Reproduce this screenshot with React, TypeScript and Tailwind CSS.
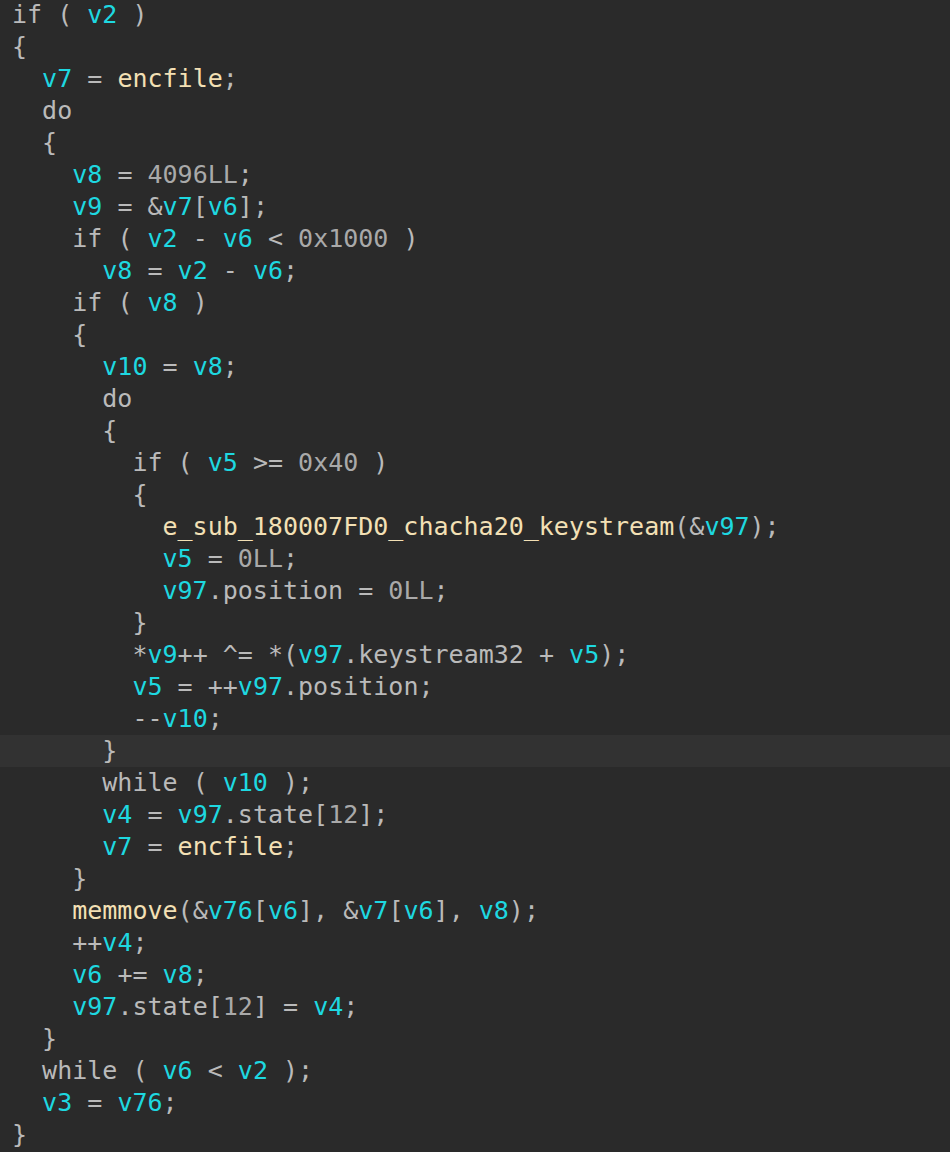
import React from 'react';

const lines = [
  'if ( v2 )',
  '{',
  '  v7 = encfile;',
  '  do',
  '  {',
  '    v8 = 4096LL;',
  '    v9 = &v7[v6];',
  '    if ( v2 - v6 < 0x1000 )',
  '      v8 = v2 - v6;',
  '    if ( v8 )',
  '    {',
  '      v10 = v8;',
  '      do',
  '      {',
  '        if ( v5 >= 0x40 )',
  '        {',
  '          e_sub_180007FD0_chacha20_keystream(&v97);',
  '          v5 = 0LL;',
  '          v97.position = 0LL;',
  '        }',
  '        *v9++ ^= *(v97.keystream32 + v5);',
  '        v5 = ++v97.position;',
  '        --v10;',
  '      }',
  '      while ( v10 );',
  '      v4 = v97.state[12];',
  '      v7 = encfile;',
  '    }',
  '    memmove(&v76[v6], &v7[v6], v8);',
  '    ++v4;',
  '    v6 += v8;',
  '    v97.state[12] = v4;',
  '  }',
  '  while ( v6 < v2 );',
  '  v3 = v76;',
  '}',
];

const globals = new Set(['encfile', 'e_sub_180007FD0_chacha20_keystream', 'memmove']);

function tokenClass(tok: string) {
  if (/^v\d+$/.test(tok)) return 'text-[#1ed8e0]';
  if (globals.has(tok)) return 'text-[#f3e0b5]';
  if (/^(0x[0-9A-Fa-f]+|\d+(LL)?)$/.test(tok)) return 'text-[#a9a9a9]';
  return 'text-[#bababa]';
}

const CodeLine: React.FC<{ text: string; active?: boolean }> = ({ text, active }) => {
  const toks = text.match(/[A-Za-z_][A-Za-z0-9_]*|0x[0-9A-Fa-f]+|\d+(?:LL)?|\s+|./g) || [];
  return (
    <div className={`h-8 pl-3 whitespace-pre ${active ? 'bg-[#323232]' : ''}`}>
      {toks.map((t, i) => (
        <span key={i} className={tokenClass(t)}>
          {t}
        </span>
      ))}
    </div>
  );
};

export default function App() {
  return (
    <div
      className="w-[950px] h-[1152px] bg-[#2a2a2a] overflow-hidden text-[25px] leading-8"
      style={{ fontFamily: '"DejaVu Sans Mono", "Liberation Mono", monospace' }}
    >
      <div className="-mt-px">
        {lines.map((l, i) => (
          <CodeLine key={i} text={l} active={i === 23} />
        ))}
      </div>
    </div>
  );
}
